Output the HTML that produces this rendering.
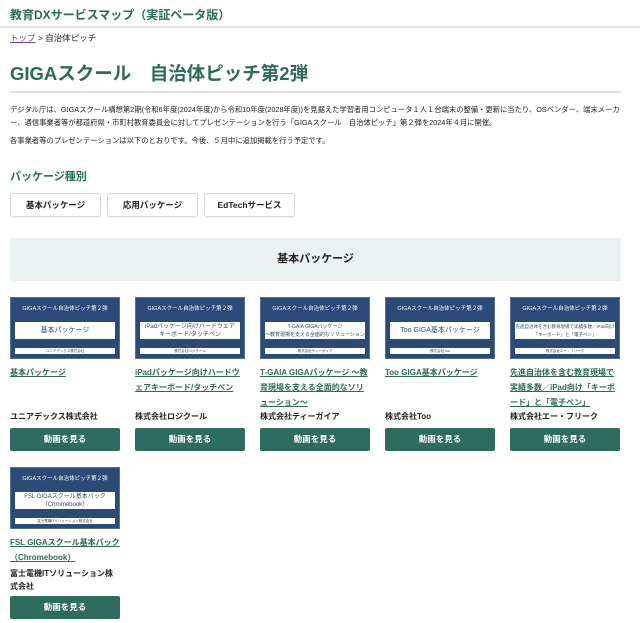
<!DOCTYPE html>
<html><head><meta charset="utf-8"><style>
*{margin:0;padding:0;box-sizing:border-box}
body{width:640px;height:623px;overflow:hidden;background:#fff;font-family:"Liberation Sans","Noto Sans CJK JP",sans-serif;color:#222;position:relative}
.a{position:absolute}
.hdr{left:0;top:0;width:640px;height:28px;border-bottom:2px solid #e6e6e6}
.hdr span{position:absolute;left:10px;top:6px;font-size:12px;font-weight:bold;color:#2d6a5a}
.bc{left:10px;top:32px;font-size:8.5px}
.bc a{color:#6b3fa0;text-decoration:underline}
h1{position:absolute;left:10px;top:60px;font-size:18.5px;color:#2d6a5a;font-weight:bold;letter-spacing:0}
.hr{left:10px;top:91px;width:611px;height:2px;background:#e3e3e3}
.p{left:10px;font-size:7.3px;line-height:13px;width:615px}
.h2{left:10px;top:168px;font-size:11px;font-weight:bold;color:#2d6a5a}
.tab{top:193px;height:24px;border:1px solid #d8d8d8;border-radius:3px;font-size:8.5px;font-weight:bold;text-align:center;line-height:22px;box-shadow:0 1px 1px #eee}
.ban{left:10px;top:238px;width:611px;height:43px;background:#e8f3f2;text-align:center;line-height:43px;font-size:11px;font-weight:bold}
.card{width:110px}
.th{position:absolute;width:110px;height:62px;background:#2b4a78;border:1px solid #5a6f90}
.th .t1{position:absolute;top:6px;width:100%;text-align:center;color:#fff;font-size:5.5px}
.th .w{position:absolute;left:4px;right:4px;top:24px;height:17px;background:#fff;color:#2b4a78;text-align:center;font-size:7px;line-height:17px;overflow:hidden;white-space:nowrap}
.th .w2{line-height:8px;padding-top:1px;font-size:6px}
.th .s{position:absolute;left:4px;right:4px;top:50px;height:6px;background:#fff;font-size:3.5px;text-align:center;color:#333;line-height:6px;overflow:hidden;white-space:nowrap}
.tt{font-size:8px;font-weight:bold;color:#2d6a5a;text-decoration:underline;line-height:15px}
.co{font-size:8px;font-weight:bold;line-height:13px}
.btn{width:110px;height:23px;background:#2e6c5e;color:#fff;font-size:8.5px;font-weight:bold;text-align:center;line-height:23px;border-radius:2px}
</style></head><body>
<div class="a hdr"><span>教育DXサービスマップ（実証ベータ版）</span></div>
<div class="a bc"><a>トップ</a> &gt; 自治体ピッチ</div>
<h1>GIGAスクール　自治体ピッチ第2弾</h1>
<div class="a hr"></div>
<div class="a p" style="top:103px">デジタル庁は、GIGAスクール構想第2期(令和6年度(2024年度)から令和10年度(2028年度))を見据えた学習者用コンピュータ１人１台端末の整備・更新に当たり、OSベンダー、端末メーカー、通信事業者等が都道府県・市町村教育委員会に対してプレゼンテーションを行う「GIGAスクール　自治体ピッチ」第２弾を2024年４月に開催。</div>
<div class="a p" style="top:134px">各事業者等のプレゼンテーションは以下のとおりです。今後、５月中に追加掲載を行う予定です。</div>
<div class="a h2">パッケージ種別</div>
<div class="a tab" style="left:10px;width:91px">基本パッケージ</div>
<div class="a tab" style="left:107px;width:91px">応用パッケージ</div>
<div class="a tab" style="left:204px;width:91px">EdTechサービス</div>
<div class="a ban">基本パッケージ</div>

<div class="th" style="left:10px;top:297px"><div class="t1">GIGAスクール自治体ピッチ第２弾</div><div class="w">基本パッケージ</div><div class="s">ユニアデックス株式会社</div></div>
<div class="th" style="left:135px;top:297px"><div class="t1">GIGAスクール自治体ピッチ第２弾</div><div class="w w2">iPadパッケージ向けハードウェア<br>キーボード/タッチペン</div><div class="s">株式会社ロジクール</div></div>
<div class="th" style="left:260px;top:297px"><div class="t1">GIGAスクール自治体ピッチ第２弾</div><div class="w w2" style="font-size:5px">T-GAIA GIGAパッケージ<br>〜教育現場を支える全面的なソリューション〜</div><div class="s">株式会社ティーガイア</div></div>
<div class="th" style="left:385px;top:297px"><div class="t1">GIGAスクール自治体ピッチ第２弾</div><div class="w">Too GIGA基本パッケージ</div><div class="s">株式会社Too</div></div>
<div class="th" style="left:510px;top:297px"><div class="t1">GIGAスクール自治体ピッチ第２弾</div><div class="w w2" style="font-size:4.5px">先進自治体を含む教育現場で実績多数／iPad向け<br>「キーボード」と「電子ペン」</div><div class="s">株式会社エー・フリーク</div></div>

<div class="a card tt" style="left:10px;top:365px">基本パッケージ</div>
<div class="a card tt" style="left:135px;top:365px">iPadパッケージ向けハードウェアキーボード/タッチペン</div>
<div class="a card tt" style="left:260px;top:365px">T-GAIA GIGAパッケージ 〜教育現場を支える全面的なソリューション〜</div>
<div class="a card tt" style="left:385px;top:365px">Too GIGA基本パッケージ</div>
<div class="a card tt" style="left:510px;top:365px">先進自治体を含む教育現場で実績多数／iPad向け「キーボード」と「電子ペン」</div>

<div class="a co" style="left:10px;top:410px">ユニアデックス株式会社</div>
<div class="a co" style="left:135px;top:410px">株式会社ロジクール</div>
<div class="a co" style="left:260px;top:410px">株式会社ティーガイア</div>
<div class="a co" style="left:385px;top:410px">株式会社Too</div>
<div class="a co" style="left:510px;top:410px">株式会社エー・フリーク</div>

<div class="a btn" style="left:10px;top:428px">動画を見る</div>
<div class="a btn" style="left:135px;top:428px">動画を見る</div>
<div class="a btn" style="left:260px;top:428px">動画を見る</div>
<div class="a btn" style="left:385px;top:428px">動画を見る</div>
<div class="a btn" style="left:510px;top:428px">動画を見る</div>

<div class="th" style="left:10px;top:467px"><div class="t1">GIGAスクール自治体ピッチ第２弾</div><div class="w w2">FSL GIGAスクール基本パック<br>（Chromebook）</div><div class="s">富士電機ITソリューション株式会社</div></div>
<div class="a card tt" style="left:10px;top:535px">FSL GIGAスクール基本パック（Chromebook）</div>
<div class="a co" style="left:10px;top:567px;width:110px">富士電機ITソリューション株式会社</div>
<div class="a btn" style="left:10px;top:596px">動画を見る</div>
</body></html>
